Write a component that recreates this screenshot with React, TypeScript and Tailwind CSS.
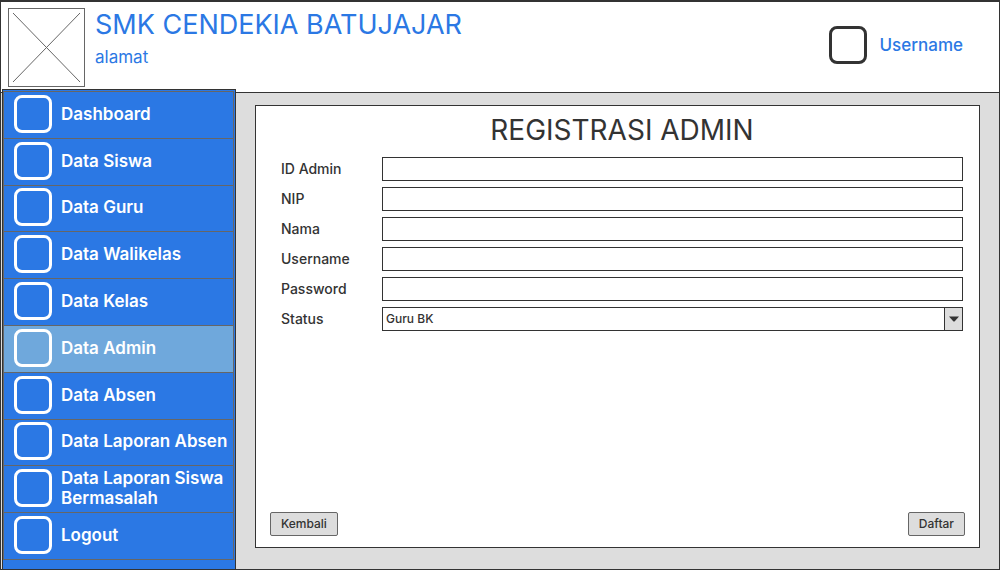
import React from 'react';

const menu = [
  'Dashboard',
  'Data Siswa',
  'Data Guru',
  'Data Walikelas',
  'Data Kelas',
  'Data Admin',
  'Data Absen',
  'Data Laporan Absen',
  'Data Laporan Siswa Bermasalah',
  'Logout',
];

const fields = [
  { id: 'id-admin', label: 'ID Admin', type: 'text' },
  { id: 'nip', label: 'NIP', type: 'text' },
  { id: 'nama', label: 'Nama', type: 'text' },
  { id: 'username', label: 'Username', type: 'text' },
  { id: 'password', label: 'Password', type: 'password' },
];

function Header() {
  return (
    <header className="flex h-[91px] shrink-0 items-start justify-between border-b border-[#333333] bg-white pl-[7px] pr-9 text-[#2b78e4]">
      <div className="flex gap-[10px] pt-[6px]">
        <svg viewBox="0 0 77 79" className="h-[79px] w-[77px] shrink-0" aria-hidden="true">
          <rect x="0.5" y="0.5" width="76" height="78" fill="#fff" stroke="#666" />
          <path d="M5 5 72 74M72 5 5 74" stroke="#666" strokeWidth="1" />
        </svg>
        <div>
          <h1 className="text-[27px] leading-[34px]">SMK CENDEKIA BATUJAJAR</h1>
          <p className="text-[17px] leading-[30px]">alamat</p>
        </div>
      </div>
      <div className="flex items-center gap-[13px] pt-6">
        <span className="size-[38px] rounded-lg border-[3px] border-[#333333]" />
        <span className="text-[17px] font-medium leading-8">Username</span>
      </div>
    </header>
  );
}

function Sidebar() {
  return (
    <nav className="relative z-10 -mt-1 ml-px flex w-[234px] shrink-0 flex-col border-x border-t border-[#333333] bg-[#2b78e4] pb-[9px] pr-px pt-px">
      <ul className="grid flex-1 auto-rows-fr border-b border-[#666666]">
        {menu.map((name) => (
          <li key={name} className="flex border-x border-t border-[#666666]">
            <a
              href="#"
              className={
                name === 'Data Admin'
                  ? 'flex flex-1 items-center gap-[9px] bg-[#6fa8dc] pb-[2px] pl-[10px] text-[17px] font-semibold leading-5 text-white'
                  : 'flex flex-1 items-center gap-[9px] pb-[2px] pl-[10px] text-[17px] font-semibold leading-5 text-white'
              }
            >
              <span className="size-[38px] shrink-0 rounded-lg border-[3px] border-white" />
              <span>{name}</span>
            </a>
          </li>
        ))}
      </ul>
    </nav>
  );
}

function RegistrationForm() {
  return (
    <form className="flex flex-1 flex-col border border-[#333333] bg-white px-[14px] pb-[11px] pt-2">
      <div className="flex flex-col gap-[6px] pl-[11px] pr-[2px]">
        <h2 className="mb-[5px] text-center text-[28px] leading-8">REGISTRASI ADMIN</h2>
        {fields.map((field) => (
          <div key={field.id} className="flex items-center">
            <label htmlFor={field.id} className="w-[101px] text-sm font-medium leading-6">
              {field.label}
            </label>
            <input
              id={field.id}
              type={field.type}
              className="h-6 min-w-0 flex-1 border border-[#333333] bg-white px-1 text-xs outline-none"
            />
          </div>
        ))}
        <div className="flex items-center">
          <label htmlFor="status" className="w-[101px] text-sm font-medium leading-6">
            Status
          </label>
          <div className="relative flex h-6 flex-1">
            <select
              id="status"
              className="min-w-0 flex-1 appearance-none border border-[#333333] bg-white pb-px pl-[3px] text-xs font-medium outline-none"
            >
              <option>Guru BK</option>
            </select>
            <span className="pointer-events-none absolute inset-y-0 right-0 flex w-[19px] items-center justify-center border border-[#333333] bg-[#dddddd]">
              <svg viewBox="0 0 10 6" className="h-[6px] w-[10px]" aria-hidden="true">
                <path d="M0 0.5h10L6 5Q5 6 4 5Z" fill="#333" />
              </svg>
            </span>
          </div>
        </div>
      </div>
      <div className="mt-auto flex justify-between">
        <button type="button" className="h-6 rounded-xs border border-[#666666] bg-[#dddddd] px-[10px] text-xs font-medium">
          Kembali
        </button>
        <button type="submit" className="h-6 rounded-xs border border-[#666666] bg-[#dddddd] px-[10px] text-xs font-medium">
          Daftar
        </button>
      </div>
    </form>
  );
}

export default function App() {
  return (
    <div className="flex min-h-screen flex-col border border-t-2 border-[#333333] bg-[#dddddd] font-['Inter','Liberation_Sans',sans-serif] text-[#333333]">
      <Header />
      <div className="flex flex-1">
        <Sidebar />
        <main className="flex min-w-0 flex-1 flex-col pb-[21px] pl-[19px] pr-[19px] pt-3">
          <RegistrationForm />
        </main>
      </div>
    </div>
  );
}
